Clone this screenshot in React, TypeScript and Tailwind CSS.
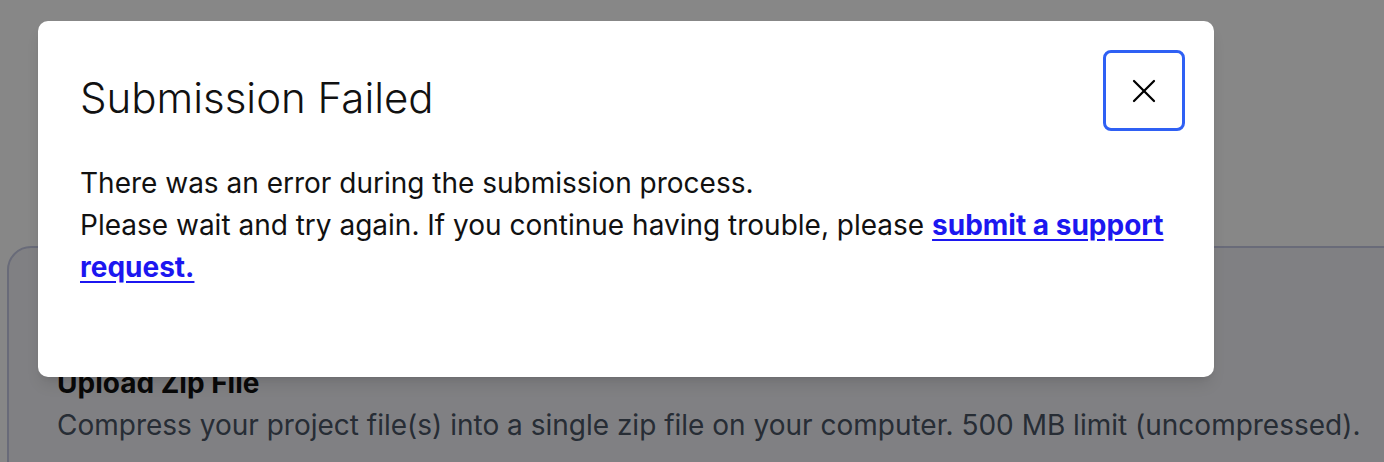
import { X } from "lucide-react";

const font = { fontFamily: "Inter, 'Noto Sans', sans-serif" };

export default function App() {
  return (
    <div className="relative h-[462px] w-[1384px] overflow-hidden bg-white" style={font}>
      {/* page behind the dialog */}
      <div className="pt-[246px] pl-[7px]">
        <div className="w-[1420px] h-[400px] rounded-[24px] border-2 border-[#c6cbe4] bg-[#f2f2f8] px-[48px] pt-[114px]">
          <h3 className="text-[28px] leading-[42px] font-bold text-[#111]">Upload Zip File</h3>
          <p className="text-[28px] leading-[42px] text-gray-600">
            Compress your project file(s) into a single zip file on your computer. 500 MB limit (uncompressed).
          </p>
        </div>
      </div>

      {/* overlay */}
      <div className="absolute inset-0 bg-black/[0.47]" />

      {/* dialog */}
      <div className="absolute left-[38px] top-[21px] w-[1176px] h-[356px] rounded-[10px] bg-white shadow-lg pt-[29px] pr-[29px] pl-[42px]">
        <div className="flex items-start justify-between">
          <h2 className="mt-[23px] text-[42px] leading-[50px] font-light text-[#111]">Submission Failed</h2>
          <button className="flex h-[81px] w-[82px] items-center justify-center rounded-[8px] border-[3px] border-[#2f60f4] bg-white">
            <X size={40} strokeWidth={1.35} className="text-black" />
          </button>
        </div>
        <div className="mt-[31px] pr-[20px] text-[28px] leading-[42px] text-[#111]">
          <p>There was an error during the submission process.</p>
          <p>
            Please wait and try again. If you continue having trouble, please{" "}
            <a href="#" className="font-bold text-[#1c17f0] underline underline-offset-[4px]">
              submit a support request.
            </a>
          </p>
        </div>
      </div>
    </div>
  );
}
